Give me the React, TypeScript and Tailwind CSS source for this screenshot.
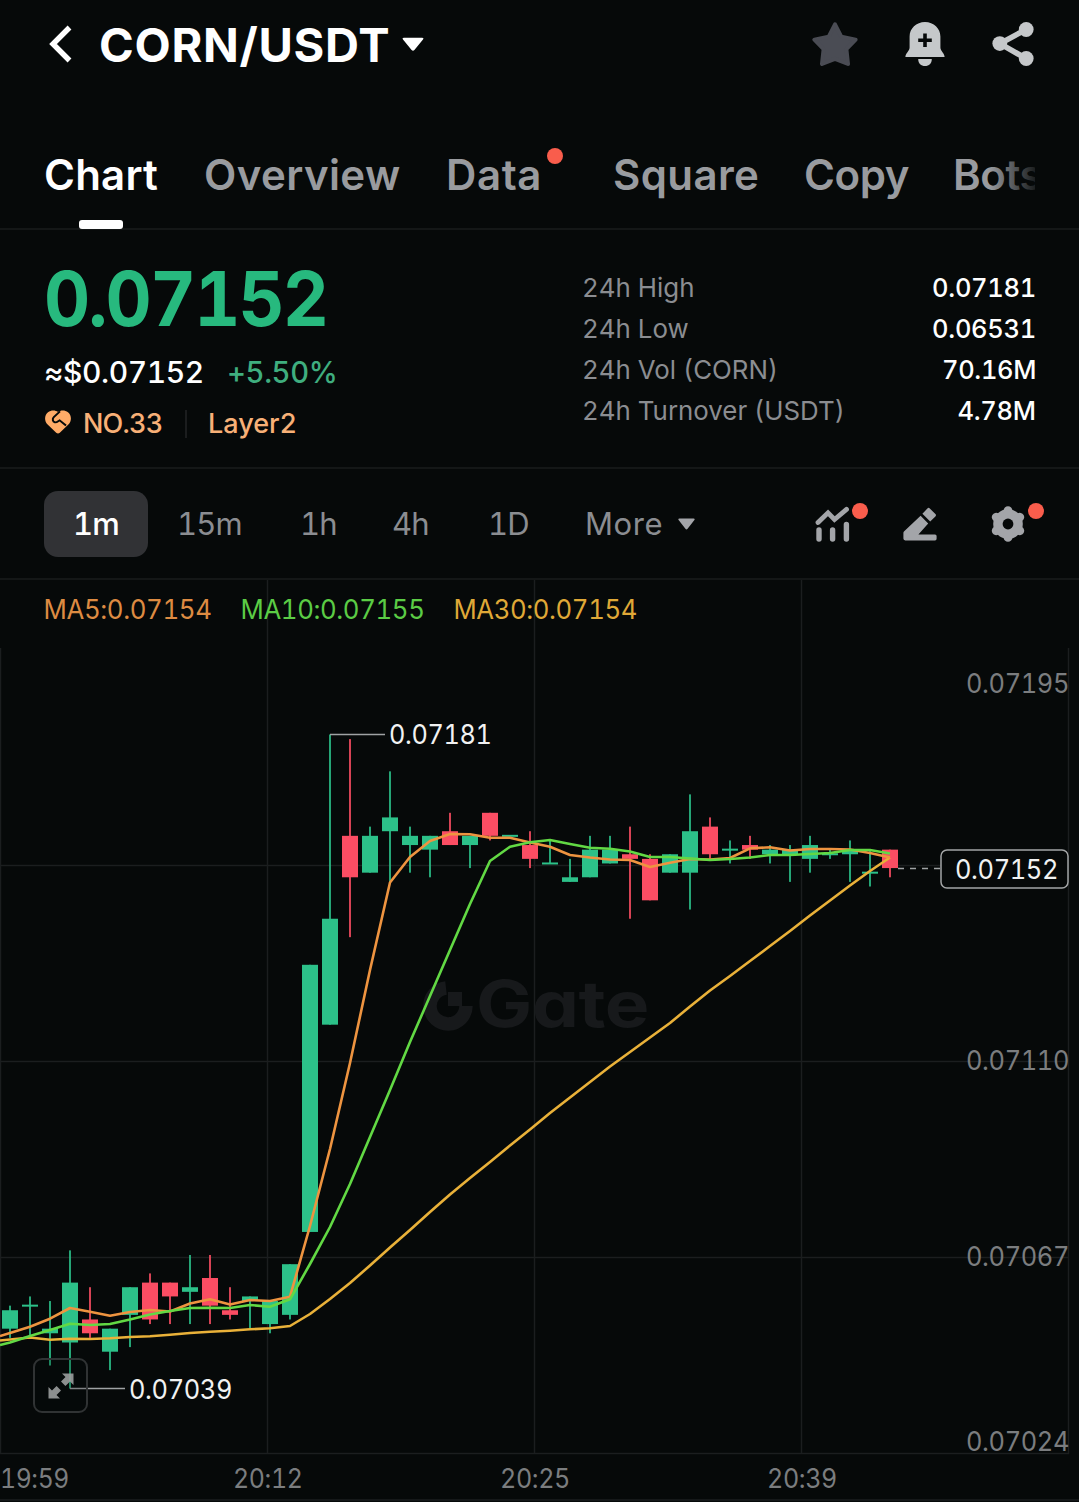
import type { ReactNode, SVGProps } from "react";
import clsx from "clsx";

type Candle = {
  up: boolean;
  high: number;
  top: number;
  bottom: number;
  low: number;
};

const c = (side: "u" | "d", high: number, top: number, bottom: number, low: number): Candle => ({
  up: side === "u",
  high,
  top,
  bottom,
  low,
});

// Prices in units of 0.00001 USDT, one candle per minute
const candles: Candle[] = [
  c("u", 7057, 7056, 7052, 7050),
  c("u", 7059, 7057, 7057, 7050),
  c("u", 7058, 7052, 7051, 7044),
  c("u", 7069, 7062, 7049, 7039),
  c("d", 7061, 7054, 7051, 7050),
  c("u", 7052, 7052, 7047, 7043),
  c("u", 7061, 7061, 7055, 7048),
  c("d", 7064, 7062, 7054, 7053),
  c("d", 7062, 7062, 7059, 7053),
  c("u", 7068, 7061, 7060, 7053),
  c("d", 7068, 7063, 7057, 7053),
  c("d", 7061, 7056, 7055, 7054),
  c("u", 7059, 7059, 7058, 7052),
  c("u", 7058, 7058, 7053, 7051),
  c("u", 7066, 7066, 7055, 7054),
  c("u", 7131, 7131, 7073, 7073),
  c("u", 7181, 7141, 7118, 7118),
  c("d", 7180, 7159, 7150, 7137),
  c("u", 7161, 7159, 7151, 7151),
  c("u", 7173, 7163, 7160, 7149),
  c("u", 7161, 7159, 7157, 7151),
  c("u", 7159, 7159, 7156, 7150),
  c("d", 7164, 7160, 7157, 7157),
  c("u", 7159, 7159, 7157, 7152),
  c("d", 7164, 7164, 7159, 7158),
  c("u", 7159, 7159, 7159, 7159),
  c("d", 7160, 7157, 7154, 7152),
  c("u", 7158, 7153, 7153, 7153),
  c("u", 7154, 7150, 7149, 7149),
  c("u", 7159, 7156, 7150, 7150),
  c("u", 7159, 7156, 7153, 7153),
  c("d", 7161, 7155, 7154, 7141),
  c("d", 7155, 7154, 7145, 7145),
  c("u", 7155, 7155, 7151, 7151),
  c("u", 7168, 7160, 7151, 7143),
  c("d", 7163, 7161, 7155, 7154),
  c("u", 7158, 7156, 7156, 7153),
  c("d", 7159, 7157, 7156, 7154),
  c("u", 7157, 7156, 7155, 7153),
  c("u", 7157, 7156, 7155, 7149),
  c("u", 7159, 7157, 7154, 7151),
  c("u", 7156, 7155, 7155, 7154),
  c("u", 7158, 7156, 7155, 7149),
  c("u", 7156, 7151, 7151, 7148),
  c("d", 7156, 7156, 7152, 7150),
];

const UP = "#2cc189";
const DOWN = "#fb4d63";

const priceY = (price: number) => 734.5 + (7181 - price) * 4.606;
const candleX = (index: number) => 10 + index * 20;

const ma5 =
  "0,1336 10,1333 30,1326.7 50,1318.7 70,1308 90,1311.7 110,1315.7 130,1312 150,1310 170,1311.5 190,1303.5 210,1299.3 230,1304.5 250,1300 270,1301 290,1296.7 310,1226 330,1149 350,1063 370,970 390,882.5 410,857 430,841 450,834 470,834.3 490,837.7 510,837.7 530,842.5 550,846.7 570,855 590,857.5 610,859.5 630,860 650,867 670,862.7 690,859 710,859.5 730,858 750,848.3 770,847.3 790,850.5 810,849 830,849 850,849.5 870,853 890,857.5";
const ma10 =
  "0,1345 10,1342.5 30,1336 50,1330 70,1323.7 90,1325 110,1324 130,1319.5 150,1314.5 170,1311 190,1308 210,1307.7 230,1308 250,1305 270,1306.7 290,1299.3 310,1264 330,1227 350,1184 370,1137 390,1090 410,1042 430,996 450,950 470,904 490,861 510,846.7 530,842.3 550,840 570,844 590,847.7 610,848.7 630,851.5 650,857 670,857 690,858.5 710,860 730,859 750,857.5 770,855 790,855 810,854 830,853 850,850 870,850 890,853.5";
const ma30 =
  "0,1340.5 30,1337.5 50,1339.7 70,1338.7 90,1339 110,1338.3 130,1337 150,1336.3 170,1334.7 190,1333 210,1331.7 230,1330.7 250,1329.3 270,1328.3 290,1326 310,1314 330,1299 350,1283 370,1265.5 390,1247.5 410,1230 430,1212 450,1194.5 470,1178 490,1162 510,1145.5 530,1129.5 550,1113 570,1097.5 590,1082 610,1066.5 630,1052 650,1037.5 670,1023 690,1006.5 710,990.5 730,976 750,961 770,946 790,931 810,915.5 830,900.5 850,885.5 870,871 890,857.5";

function StarIcon() {
  return (
    <svg width="46" height="44" viewBox="0 0 46 44" fill="#4a4c54" stroke="#4a4c54" strokeWidth="4" strokeLinejoin="round">
      <path d="M23 2.4 L29.4 14.8 L43.6 17.6 L34.4 27.2 L36 42 L23 36.8 L10 42 L11.6 27.2 L2.4 17.6 L16.6 14.8 Z" />
    </svg>
  );
}

function BellIcon() {
  return (
    <svg width="40" height="44" viewBox="0 0 40 44" fill="#c5c8ca">
      <path d="M20 0 C28.8 0 35.4 6.4 35.4 14.6 V25.6 C35.4 29 39.6 31.6 39.6 35 H0.4 C0.4 31.6 4.6 29 4.6 25.6 V14.6 C4.6 6.4 11.2 0 20 0 Z" />
      <path d="M13.2 37 H26.8 C26.8 41.4 24 44 20 44 C16 44 13.2 41.4 13.2 37 Z" />
      <path d="M20 11.4 V25 M13.2 18.2 H26.8" stroke="#060909" strokeWidth="3.6" />
    </svg>
  );
}

function ShareIcon() {
  return (
    <svg width="42" height="44" viewBox="0 0 42 44" fill="#c5c8ca">
      <path d="M34 7.5 L8 21.6 L34 36.5" fill="none" stroke="#c5c8ca" strokeWidth="5.6" />
      <circle cx="34.2" cy="7.5" r="7.4" />
      <circle cx="7.8" cy="21.6" r="7.4" />
      <circle cx="34.2" cy="36.5" r="7.4" />
    </svg>
  );
}

function HeartIcon() {
  return (
    <svg className="relative top-[-2px] left-px" width="26" height="24" viewBox="0 0 26 25" preserveAspectRatio="none">
      <path
        d="M11.2 23.8 L2.6 15.2 C-1 11.6 -0.6 5.4 3 2.4 C6 -0.2 10.4 0 13 2 C15.6 0 20 -0.2 23 2.4 C26.6 5.4 27 11.6 23.4 15.2 L14.8 23.8 Q13 25.4 11.2 23.8 Z"
        fill="#ffab67"
      />
      <path
        d="M15 1.4 L8.8 7.4 C7 9.4 7.8 12.2 9.8 12.8 C11.8 13.4 12.8 11.8 14.6 10.8 L21 16.2"
        fill="none"
        stroke="#060909"
        strokeWidth="2"
      />
    </svg>
  );
}

function IndicatorIcon() {
  return (
    <svg width="36" height="36" viewBox="0 0 36 36" fill="none" stroke="#a3a5a9" strokeLinecap="round">
      <path d="M3 16.5 L13 6.8 L19.5 13.5 L31.5 3.4" strokeWidth="4.8" />
      <path d="M4 24 V33 M17.6 24 V33 M31.4 18.4 V33" strokeWidth="5.4" />
    </svg>
  );
}

function PencilIcon() {
  return (
    <svg width="34" height="34" viewBox="0 0 34 34" fill="#a3a5a9">
      <path d="M17.6 8.8 L25.2 16.4 L15.4 27.4 H32 Q33.6 27.4 33.6 29 V31.8 Q33.6 33.4 32 33.4 H2.2 Q0.4 33.4 0.4 31.6 V26 Q0.4 25 1.2 24.2 Z" />
      <path d="M19.4 6.8 L24.4 1.4 Q25.6 0.2 26.8 1.4 L32.4 7 Q33.6 8.2 32.4 9.4 L27.2 14.6 Z" />
    </svg>
  );
}

function GearIcon() {
  return (
    <svg width="34" height="36" viewBox="0 0 34 36">
      <circle cx="17" cy="18" r="14.8" fill="#a3a5a9" />
      <path
        d="M17 4.6 V31.4 M5.2 11.2 L28.8 24.8 M28.8 11.2 L5.2 24.8"
        stroke="#a3a5a9"
        strokeWidth="8.8"
        strokeLinecap="round"
      />
      <circle cx="17" cy="18" r="5.4" fill="#060909" />
    </svg>
  );
}

function Dot({ className }: { className: string }) {
  return <span className={clsx("absolute size-4 rounded-full bg-[#f95d4c]", className)} />;
}

function Header() {
  return (
    <header className="flex h-[89px] items-center pr-[45px] pl-[49px]">
      <svg className="mt-[-1px]" width="23" height="38" viewBox="0 0 23 38" fill="none" stroke="#fff" strokeWidth="5.4">
        <path d="M20.5 2.5 L4 19 L20.5 35.5" />
      </svg>
      <h1 className="mt-[-1px] ml-[27px] text-[47px] leading-none font-bold tracking-[0.7px] text-white">CORN/USDT</h1>
      <svg className="ml-[12px]" width="22" height="15" viewBox="0 0 22 16" preserveAspectRatio="none" fill="#fff">
        <path d="M2 0.8 H20 Q22.4 1 20.8 3 L12.4 13.8 Q11 15.4 9.6 13.8 L1.2 3 Q-0.4 1 2 0.8 Z" />
      </svg>
      <div className="mt-[-1px] ml-auto flex items-center gap-[47px]">
        <StarIcon />
        <BellIcon />
        <ShareIcon />
      </div>
    </header>
  );
}

function Tab({ children, className }: { children: ReactNode; className?: string }) {
  return <div className={clsx("relative shrink-0", className)}>{children}</div>;
}

function Tabs() {
  return (
    <nav className="h-[141px] border-b-2 border-[#141717] px-[44px] pt-[60px]">
      <div className="relative flex h-[80px] overflow-x-clip text-[42px] leading-[52px] font-semibold text-[#999b9f]">
        <Tab className="w-[160px] tracking-[0.2px] text-white">
          Chart
          <span className="absolute top-[71px] left-[35px] h-[9px] w-[44px] rounded-[3px] bg-white" />
        </Tab>
        <Tab className="w-[242px] tracking-[0.4px]">Overview</Tab>
        <Tab className="w-[167px] tracking-[0.6px]">
          Data
          <Dot className="top-[-1px] left-[101px]" />
        </Tab>
        <Tab className="w-[191px] tracking-[0.4px]">Square</Tab>
        <Tab className="w-[149px] tracking-[-0.4px]">Copy</Tab>
        <Tab className="tracking-[-0.4px]">Bots</Tab>
        <div className="absolute top-0 right-0 h-[60px] w-[46px] bg-linear-to-r from-transparent to-[#060909]/85" />
      </div>
    </nav>
  );
}

const stats = [
  { label: "24h High", value: "0.07181" },
  { label: "24h Low", value: "0.06531" },
  { label: "24h Vol (CORN)", value: "70.16M" },
  { label: "24h Turnover (USDT)", value: "4.78M" },
];

function Summary() {
  return (
    <section className="flex h-[239px] justify-between border-b-2 border-[#141717] px-[44px]">
      <div>
        <div className="mt-[28px] w-[282px] origin-left scale-x-[0.94] text-[76px] leading-[80px] font-bold tracking-[-2px] text-[#27b97e]">
          0.07152
        </div>
        <div className="mt-[16px] flex text-[30px] leading-[36px] font-medium">
          <span className="w-[183px] origin-left tracking-[-0.4px] text-white">≈$0.07152</span>
          <span className="origin-left scale-x-[0.975] tracking-[-0.4px] text-[#3fae7f]">+5.50%</span>
        </div>
        <div className="mt-[16px] flex h-[36px] items-center text-[27px] leading-[36px] font-medium text-[#f8b077]">
          <HeartIcon />
          <span className="ml-[13px] w-[80px] tracking-[-0.8px]">NO.33</span>
          <span className="mr-[21px] ml-[22px] h-[28px] w-[2px] bg-[#1b1d1e]" />
          <span>Layer2</span>
        </div>
      </div>
      <dl className="mt-[37px] w-[453px]">
        {stats.map((s) => (
          <div key={s.label} className="flex h-[41px] items-center justify-between text-[26px]">
            <dt className="origin-left scale-x-[0.995] text-[#8b8d91]">{s.label}</dt>
            <dd className="mr-[-1px] origin-right scale-x-[0.98] font-medium tracking-[-0.3px] text-white">{s.value}</dd>
          </div>
        ))}
      </dl>
    </section>
  );
}

function Intervals() {
  return (
    <section className="flex h-[111px] items-center border-b-2 border-[#141717] pr-[54px] pl-[44px] text-[31px] text-[#8b8d91]">
      <div className="flex h-[66px] w-[104px] items-center justify-center rounded-[14px] bg-[#313235] pt-px font-medium tracking-[-0.8px] text-white">
        1m
      </div>
      <div className="mt-[2px] ml-[29px] w-[123px] tracking-[-0.9px]">15m</div>
      <div className="mt-[2px] w-[92px] tracking-[-0.9px]">1h</div>
      <div className="mt-[2px] w-[96px] tracking-[-0.9px]">4h</div>
      <div className="mt-[2px] w-[97px] tracking-[-0.9px]">1D</div>
      <div className="mt-px flex items-center gap-[15px]">
        <span className="tracking-[0.6px]">More</span>
        <svg width="17" height="12" viewBox="0 0 17 12" fill="#a3a5a9">
          <path d="M1.4 0.5 H15.6 Q17.4 0.8 16.2 2.2 L9.6 10.8 Q8.5 12 7.4 10.8 L0.8 2.2 Q-0.4 0.8 1.4 0.5 Z" />
        </svg>
      </div>
      <div className="ml-auto flex items-center gap-[54px]">
        <div className="relative mr-[-2px]">
          <IndicatorIcon />
          <Dot className="top-[-3px] left-[37px]" />
        </div>
        <PencilIcon />
        <div className="relative">
          <GearIcon />
          <Dot className="top-[-3px] left-[37px]" />
        </div>
      </div>
    </section>
  );
}

function CandleShape({ candle, x }: { candle: Candle; x: number }) {
  const color = candle.up ? UP : DOWN;
  const top = priceY(candle.top);
  const height = priceY(candle.bottom) - top;
  return (
    <g fill={color}>
      <rect x={x - 1} y={priceY(candle.high)} width="2" height={priceY(candle.low) - priceY(candle.high)} opacity="0.85" />
      <rect x={x - 8} y={height ? top : top - 1} width="16" height={height || 2} />
    </g>
  );
}

function ChartText(props: SVGProps<SVGTextElement>) {
  return <text lengthAdjust="spacingAndGlyphs" {...props} />;
}

function Chart() {
  return (
    <section className="relative h-[922px]">
      <svg className="block" width="1079" height="922" viewBox="0 580 1079 922" fontSize="26.5" letterSpacing="-0.4">
        <g stroke="#1b1e1f" strokeWidth="1.5">
          <path d="M0.5 648 V1454 M267.5 580 V1454 M534.5 580 V1454 M801.5 580 V1454 M1068.5 648 V1454" />
          <path d="M0 865.5 H1069 M0 1061.5 H1069 M0 1257.5 H1069 M0 1453.5 H1069 M0 1500 H1079" />
        </g>

        <g fill="#17191b">
          <path d="M446 988 A18 18 0 1 0 466 1006" fill="none" stroke="#17191b" strokeWidth="13.5" />
          <rect x="448" y="992" width="14" height="14" />
          <ChartText
            className="[font-feature-settings:'cv11']"
            x="476"
            y="1027"
            fontSize="64"
            fontWeight="700"
            textLength="173"
          >
            Gate
          </ChartText>
        </g>

        {candles.map((candle, i) => (
          <CandleShape key={i} candle={candle} x={candleX(i)} />
        ))}

        <g fill="none" strokeWidth="2.6" strokeLinejoin="round">
          <polyline points={ma30} stroke="#e9b139" />
          <polyline points={ma5} stroke="#ee9440" />
          <polyline points={ma10} stroke="#62d944" />
        </g>

        <g stroke="#9fa2a4" strokeWidth="1.6" fill="none">
          <path d="M330 734.5 H385" />
          <path d="M70 1388.5 H125" />
          <path d="M898 868.5 H941" strokeDasharray="6 6" />
        </g>

        <ChartText x="43.5" y="618.5" textLength="168" fill="#dd8b42">MA5:0.07154</ChartText>
        <ChartText x="240.5" y="618.5" textLength="184" fill="#5bcc45">MA10:0.07155</ChartText>
        <ChartText x="453.5" y="618.5" textLength="183.5" fill="#dfa837">MA30:0.07154</ChartText>

        <g fill="#f1f2f2">
          <ChartText x="389" y="743.5" textLength="102.5">0.07181</ChartText>
          <ChartText x="129" y="1398.5" textLength="103">0.07039</ChartText>
        </g>
        <rect x="941" y="850" width="127" height="38" rx="6" fill="#060909" stroke="#a3a5a6" strokeWidth="1.5" />
        <ChartText x="955" y="878.5" textLength="103" fill="#f1f2f2">0.07152</ChartText>

        <g fill="#7b7d7f">
          <ChartText x="966" y="692.5" textLength="103">0.07195</ChartText>
          <ChartText x="966" y="1070" textLength="103">0.07110</ChartText>
          <ChartText x="966" y="1266" textLength="103">0.07067</ChartText>
          <ChartText x="966" y="1451" textLength="103">0.07024</ChartText>
          <ChartText x="0" y="1487.5" textLength="69">19:59</ChartText>
          <ChartText x="233" y="1487.5" textLength="69.5">20:12</ChartText>
          <ChartText x="500" y="1487.5" textLength="70">20:25</ChartText>
          <ChartText x="767" y="1487.5" textLength="70">20:39</ChartText>
        </g>
      </svg>

      <button className="absolute top-[778px] left-[33px] flex size-[55px] items-center justify-center rounded-[9px] border-2 border-[#303334] bg-[#060909]/20">
        <svg width="26" height="26" viewBox="0 0 26 26" fill="#9b9e9f" fillOpacity="0.9">
          <path d="M14 0.5 H25.5 V12 L22 8.5 L17.4 13 L13 8.6 L17.5 4 Z" />
          <path d="M12 25.5 H0.5 V14 L4 17.5 L8.6 13 L13 17.4 L8.5 22 Z" />
        </svg>
      </button>
    </section>
  );
}

export default function App() {
  return (
    <main className="h-[1502px] w-[1079px] overflow-hidden bg-[#060909] font-['Inter','Liberation_Sans',sans-serif] tabular-nums">
      <Header />
      <Tabs />
      <Summary />
      <Intervals />
      <Chart />
    </main>
  );
}
